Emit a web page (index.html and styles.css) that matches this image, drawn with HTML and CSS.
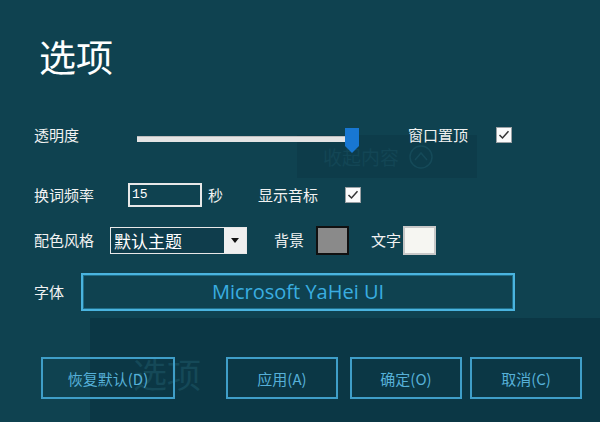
FILE: index.html
```html
<!DOCTYPE html>
<html lang="zh-CN">
<head>
  <meta charset="UTF-8">
  <title>选项</title>
  <link rel="stylesheet" href="styles.css">
</head>
<body>
  <div class="shade"></div>
  <div class="ghost-fold">
    <span>收起内容</span>
    <svg class="ghost-circle" width="24" height="24" viewBox="0 0 24 24"><circle cx="12" cy="12" r="11" fill="none" stroke="#154a59" stroke-width="1.5"/><path d="M6 15 L12 8 L18 15" fill="none" stroke="#154a59" stroke-width="1.5"/></svg>
  </div>
  <div class="ghost-title">选项</div>

  <div class="dialog">
    <h1 class="title">选项</h1>

    <div class="row row-opacity">
      <span class="label label-opacity">透明度</span>
      <div class="slider">
        <div class="track"></div>
        <svg class="thumb" width="16" height="27" viewBox="0 0 16 27"><path d="M1 1 H15 V19 L8 26 L1 19 Z" fill="#1877d2"/></svg>
      </div>
      <span class="label label-top">窗口置顶</span>
      <span class="check"><svg width="16" height="16" viewBox="0 0 16 16"><rect x="0.5" y="0.5" width="15" height="15" fill="#fbfbfb" stroke="#9aa0a4"/><path d="M3.5 8 L6.5 11 L12.5 4.2" fill="none" stroke="#333" stroke-width="1.5"/></svg></span>
    </div>

    <div class="row row-freq">
      <span class="label label-freq">换词频率</span>
      <div class="num-input">15</div>
      <span class="label label-sec">秒</span>
      <span class="label label-phon">显示音标</span>
      <span class="check"><svg width="16" height="16" viewBox="0 0 16 16"><rect x="0.5" y="0.5" width="15" height="15" fill="#fbfbfb" stroke="#9aa0a4"/><path d="M3.5 8 L6.5 11 L12.5 4.2" fill="none" stroke="#333" stroke-width="1.5"/></svg></span>
    </div>

    <div class="row row-theme">
      <span class="label label-theme">配色风格</span>
      <div class="select">
        <span class="select-text">默认主题</span>
        <span class="select-btn"><svg width="8" height="5" viewBox="0 0 8 5"><path d="M0 0 H8 L4 5 Z" fill="#111"/></svg></span>
      </div>
      <span class="label label-bg">背景</span>
      <span class="swatch swatch-bg"></span>
      <span class="label label-fg">文字</span>
      <span class="swatch swatch-fg"></span>
    </div>

    <div class="row row-font">
      <span class="label label-font">字体</span>
      <div class="font-box">Microsoft YaHei UI</div>
    </div>

    <div class="buttons">
      <button class="btn btn-reset">恢复默认(D)</button>
      <button class="btn btn-apply">应用(A)</button>
      <button class="btn btn-ok">确定(O)</button>
      <button class="btn btn-cancel">取消(C)</button>
    </div>
  </div>
</body>
</html>
```

FILE: styles.css
```css
/* Page */
body {
  margin: 0;
  width: 600px;
  height: 422px;
  overflow: hidden;
  position: relative;
  background-color: #0f4250;
  font-family: "Noto Sans CJK SC", "Noto Sans", sans-serif;
  color: #f2f2f2;
}

/* faint leftovers of other windows behind the dialog */
.shade {
  position: absolute;
  left: 90px;
  top: 318px;
  right: 0;
  bottom: 0;
  background-color: #0b3745;
}

.ghost-fold {
  position: absolute;
  left: 297px;
  top: 135px;
  width: 180px;
  height: 43px;
  background-color: #0d3c4a;
  display: flex;
  align-items: center;
  padding-left: 26px;
  box-sizing: border-box;
  gap: 10px;
  font-size: 19px;
  color: #134655;
}

.ghost-title {
  position: absolute;
  left: 133px;
  top: 352px;
  font-size: 34px;
  line-height: 44px;
  color: #154958;
}

.dialog {
  position: relative;
  padding-left: 34px;
}

.title {
  margin: 35px 0 0 5px;
  font-size: 37px;
  line-height: 42px;
  font-weight: normal;
  color: #ffffff;
}

/* Rows */
.row {
  display: flex;
  align-items: center;
  height: 30px;
}

.label {
  font-size: 15px;
  line-height: 20px;
  white-space: nowrap;
}

.row-opacity { margin-top: 43px; }
.label-opacity { width: 103px; }

.slider {
  position: relative;
  width: 223px;
  height: 30px;
}

.track {
  position: absolute;
  left: 0;
  top: 16px;
  width: 210px;
  height: 5px;
  background-color: #e4e4e4;
  border-top: 1px solid #bdbdbd;
}

.thumb {
  position: absolute;
  left: 207px;
  top: 7px;
}

.label-top { margin-left: 48px; width: 88px; }

.check {
  display: flex;
  width: 16px;
  height: 16px;
}

.row-freq { margin-top: 30px; }
.label-freq { width: 94px; }

.num-input {
  width: 68px;
  height: 20px;
  border: 2px solid #e8e8e8;
  font-family: "Liberation Mono", monospace;
  font-size: 13px;
  line-height: 20px;
  padding-left: 2px;
  color: #ffffff;
}

.label-sec { margin-left: 6px; width: 50px; }
.label-phon { width: 87px; }

.row-theme { margin-top: 15px; }
.label-theme { width: 76px; }

.select {
  display: flex;
  width: 135px;
  height: 25px;
  border: 1px solid #e8e8e8;
  background-color: #0f3d4c;
}

.select-text {
  flex: 1;
  font-size: 17px;
  line-height: 25px;
  padding-left: 3px;
  color: #ffffff;
}

.select-btn {
  width: 22px;
  display: flex;
  align-items: center;
  justify-content: center;
  background-color: #efefef;
}

.label-bg { margin-left: 27px; width: 42px; }
.label-fg { margin-left: 22px; width: 32px; }

.swatch {
  width: 29px;
  height: 25px;
  border: 2px solid #101010;
}

.swatch-bg { background-color: #8a8a8a; }
.swatch-fg { background-color: #f6f6f2; border-color: #c8c8c8; }

.row-font {
  margin-top: 18px;
  height: 38px;
}

.label-font { width: 47px; }

.font-box {
  width: 430px;
  height: 34px;
  border: 2px solid #4ab4df;
  box-shadow: inset 0 0 0 1px #1f6f8a;
  text-align: center;
  font-family: "Open Sans", "Noto Sans", sans-serif;
  font-size: 20px;
  line-height: 34px;
  color: #3aaee0;
}

/* Bottom buttons */
.buttons {
  display: flex;
  margin-top: 46px;
  padding-left: 7px;
}

.btn {
  height: 42px;
  background: transparent;
  border: 2px solid #3f9ec8;
  color: #56b0d8;
  font-family: "Noto Sans CJK SC", sans-serif;
  font-size: 15px;
  padding: 0;
}

.btn-reset { width: 134px; }
.btn-apply { width: 112px; margin-left: 51px; }
.btn-ok { width: 112px; margin-left: 12px; }
.btn-cancel { width: 112px; margin-left: 8px; }
```
